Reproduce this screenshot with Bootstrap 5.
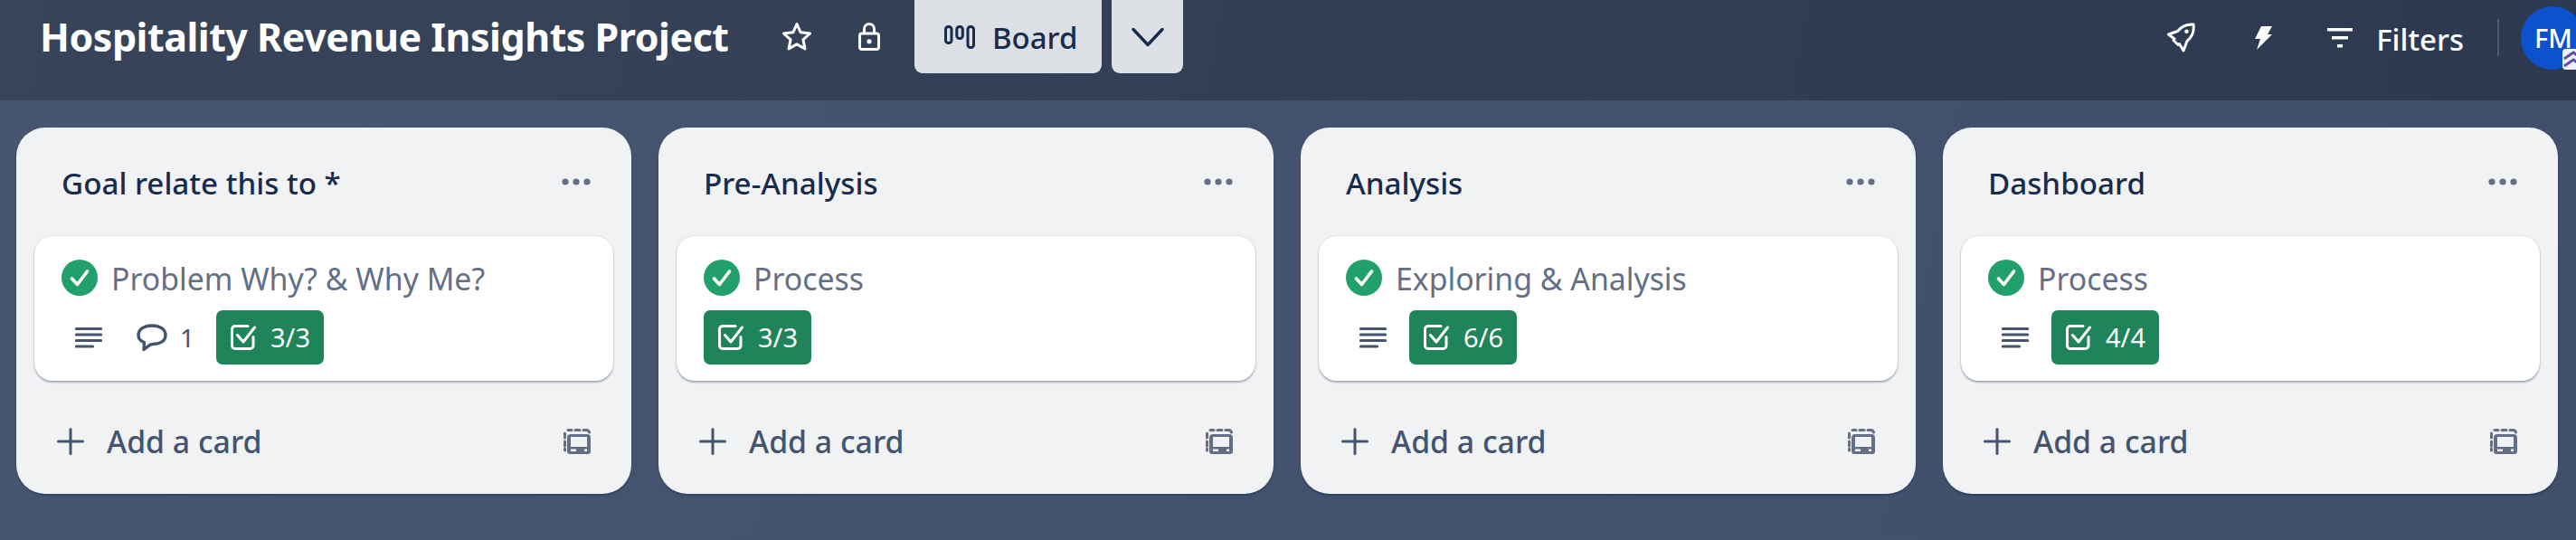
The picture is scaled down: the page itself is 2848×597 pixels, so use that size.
<!doctype html>
<html lang="en"><head><meta charset="utf-8"><title>Board</title>
<link href="https://cdn.jsdelivr.net/npm/bootstrap@5.3.0/dist/css/bootstrap.min.css" rel="stylesheet">
<style>
html,body{height:100%}
body{font-family:"Noto Sans","Open Sans",sans-serif;background:linear-gradient(100deg,#465671 0%,#3f4f6c 100%);overflow:hidden;color:#172b4d}
.topbar{height:111px;background:linear-gradient(100deg,#37445a 0%,#2d3950 100%);color:#fff;padding-left:44px;padding-right:0}
.board-title{font-size:43px;font-weight:700;line-height:86px;letter-spacing:-.48px;margin:0;width:762px;white-space:nowrap}
.ico-star{margin-left:58px}
.ico-lock{margin-left:51px}
.view-btn{background:#dcdfe4;color:#172b4d;height:81px;border-radius:0 0 9px 9px;font-size:33px;font-weight:500}
.view-board{width:207px;margin-left:38px;padding-left:33px;gap:19px}
.view-board span{padding-top:3px}
.view-more{width:79px;margin-left:11px}
.top-main{height:81px}
.top-right{height:82px;padding-top:1px}
.filters-label{font-size:33px;font-weight:500;margin-left:26px;line-height:1;padding-top:3px}
.v-sep{width:2px;height:41px;background:#4b5a73;margin-left:37px}
.avatar-clip{width:61px;height:70px;overflow:hidden;margin-left:24px;position:relative}
.avatar-dot{width:70px;height:70px;border-radius:50%;background:#0c52cc;color:#fff;font-size:29px;font-weight:500;padding-left:15px;line-height:70px}
.avatar-badge{position:absolute;right:-9px;bottom:0}
.lists{padding:30px 0 0 18px;gap:30px}
.tlist{width:680px;height:405px;background:#f1f2f4;border-radius:32px;padding:0 20px;box-shadow:0 2px 2px rgba(9,30,66,.3);flex:none}
.tlist-head{height:120px;padding:0 25px 0 30px}
.tlist-name{font-size:33.2px;font-weight:500;line-height:1;color:#172b4d;padding-top:3px}
.tcard{height:160px;background:#fff;border-radius:20px;box-shadow:0 2px 2px rgba(9,30,66,.3),0 0 2px rgba(9,30,66,.2);padding:25px 30px 0}
.tcard-title{font-size:33.8px;color:#626f86;line-height:40px;gap:15px}
.tcard-title span{padding-top:2px}
.tcard-meta{margin-top:15px;height:60px;color:#44546f;font-size:28px}
.meta-desc{margin:0 38px 0 15px}
.meta-num{margin:0 24px 0 14px;line-height:1}
.done-tag{width:119px;height:60px;background:#1f845a;border-radius:7px;color:#fff;font-size:29px;padding-left:16px;gap:16px}
.tlist-foot{height:125px;padding:8px 25px 0;color:#44546f}
.add-label{font-size:33.8px;font-weight:500;margin-left:25px;line-height:1;padding-top:3px}
</style></head>
<body>
<svg width="0" height="0" class="d-none">
<defs>
<symbol id="i-check" viewBox="0 0 40 40"><circle cx="20" cy="20" r="20" fill="#22a06b"/><path d="M11.500 21l6 6.500L28.500 13" fill="none" stroke="#fff" stroke-width="3.600" stroke-linecap="round" stroke-linejoin="round"/></symbol>
<symbol id="i-desc" viewBox="0 0 30 24"><path d="M1.500 2.500h27M1.500 9h27M1.500 15.500h27M1.500 22h18" stroke="#44546f" stroke-width="3.200" stroke-linecap="round" fill="none"/></symbol>
<symbol id="i-comment" viewBox="0 0 34 30"><path d="M17 2c8 0 15 3.500 15 10.500S25 22.500 18 22.500c-2 0-3.500 .5-5.500 2.500L8 28.500l.5-8C4 19 2 16 2 12.500 2 5.500 9 2 17 2Z" fill="none" stroke="#44546f" stroke-width="3.400" stroke-linejoin="round"/></symbol>
<symbol id="i-box" viewBox="0 0 28 28"><path d="M25 13.500V23a3.500 3.500 0 0 1-3.500 3.500H5A3.500 3.500 0 0 1 1.500 23V5A3.500 3.500 0 0 1 5 1.500h14" fill="none" stroke="#fff" stroke-width="3" stroke-linecap="round"/><path d="M7.500 11.500l6.500 7.500L26.500 3" fill="none" stroke="#fff" stroke-width="3" stroke-linecap="round" stroke-linejoin="round"/></symbol>
<symbol id="i-plus" viewBox="0 0 30 30"><path d="M15 1.500v27M1.500 15h27" stroke="#44546f" stroke-width="3" stroke-linecap="round"/></symbol>
<symbol id="i-tpl" viewBox="0 0 30 28"><path d="M5 1.500h4M13 1.500h5M22 1.500h3a3.500 3.500 0 0 1 3.500 2.500M1.500 5v5M1.500 14v5M1.500 22v2" stroke="#626f86" stroke-width="3" fill="none" stroke-linecap="round"/><path fill-rule="evenodd" d="M8 6h18a4 4 0 0 1 4 4v15a3 3 0 0 1-3 3H7a3 3 0 0 1-3-3V10a4 4 0 0 1 4-4Zm0 3v11h18V9ZM8 22.500v2.500h6v-2.500Zm15 0v2.500h3v-2.500Z" fill="#626f86"/></symbol>
</defs>
</svg>

<header class="topbar d-flex align-items-start justify-content-between">
  <div class="top-main d-flex align-items-center">
    <h1 class="board-title">Hospitality Revenue Insights Project</h1>
    <svg class="ico-star" width="34" height="33" viewBox="0 0 34 33"><path d="M17 2.500l4.200 9.300 10.300 1.200-7.600 6.900 2.100 10.100L17 24.900 8 30l2.100-10.100L2.500 13l10.300-1.200Z" fill="none" stroke="#fff" stroke-width="3" stroke-linejoin="round"/></svg>
    <svg class="ico-lock" width="24" height="31" viewBox="0 0 24 31"><path d="M6.500 12V7a5.500 5.500 0 0 1 11 0v5" fill="none" stroke="#fff" stroke-width="3"/><rect x="1.500" y="12" width="21" height="17.500" rx="2.500" fill="none" stroke="#fff" stroke-width="3"/><circle cx="12" cy="20.800" r="2.600" fill="#fff"/></svg>
    <div class="view-btn view-board d-flex align-items-center">
      <svg width="34" height="26" viewBox="0 0 34 26"><g fill="none" stroke="#172b4d" stroke-width="3"><rect x="1.500" y="1.500" width="6.500" height="18" rx="3"/><rect x="13.800" y="1.500" width="6.500" height="13" rx="3"/><rect x="26" y="1.500" width="6.500" height="23" rx="3"/></g></svg>
      <span>Board</span>
    </div>
    <div class="view-btn view-more d-flex align-items-center justify-content-center">
      <svg width="36" height="22" viewBox="0 0 36 22"><path d="M2 2.500l16 17 16-17" fill="none" stroke="#172b4d" stroke-width="3.400" stroke-linecap="round" stroke-linejoin="round"/></svg>
    </div>
  </div>
  <div class="top-right d-flex align-items-center">
    <svg width="32" height="33" viewBox="0 0 32 33"><path d="M30 2C24 1.500 17 4 12.500 9.500L2.500 13 9 18l-1 1.500 5 5 1.500-1L19 31l4-10.500C28.500 16 31 9 30 2Z" fill="none" stroke="#fff" stroke-width="3" stroke-linejoin="round"/><circle cx="22.500" cy="9.800" r="2.300" fill="#fff"/></svg>
    <svg style="margin-left:65px" width="20" height="26" viewBox="0 0 20 26"><path d="M8 0h12l-5 9h5L3 26l4-12H1Z" fill="#fff"/></svg>
    <svg style="margin-left:61px" width="28" height="22" viewBox="0 0 28 22"><path d="M0 0h28v3.500H0ZM5 9h18v3.500H5ZM11 18h6v3.500h-6Z" fill="#fff"/></svg>
    <span class="filters-label">Filters</span>
    <span class="v-sep"></span>
    <div class="avatar-clip">
      <div class="avatar-dot">FM</div>
      <svg class="avatar-badge" width="24" height="23" viewBox="0 0 24 23"><rect width="24" height="23" rx="4" fill="#eef0fa"/><path d="M2 11l10-7 10 7M2 19l10-7 10 7" fill="none" stroke="#5e4db2" stroke-width="3"/></svg>
    </div>
  </div>
</header>

<main class="lists d-flex align-items-start">

  <section class="tlist">
    <div class="tlist-head d-flex align-items-center justify-content-between">
      <span class="tlist-name">Goal relate this to *</span>
      <svg width="32" height="8" viewBox="0 0 32 8" fill="#626f86"><circle cx="4" cy="4" r="3.600"/><circle cx="16" cy="4" r="3.600"/><circle cx="28" cy="4" r="3.600"/></svg>
    </div>
    <article class="tcard">
      <div class="tcard-title d-flex align-items-center"><svg width="40" height="40"><use href="#i-check"/></svg><span>Problem Why? &amp; Why Me?</span></div>
      <div class="tcard-meta d-flex align-items-center">
        <svg class="meta-desc" width="30" height="24"><use href="#i-desc"/></svg>
        <svg width="34" height="30"><use href="#i-comment"/></svg>
        <span class="meta-num">1</span>
        <span class="done-tag d-flex align-items-center"><svg width="28" height="28"><use href="#i-box"/></svg>3/3</span>
      </div>
    </article>
    <div class="tlist-foot d-flex align-items-center">
      <svg width="30" height="30"><use href="#i-plus"/></svg><span class="add-label">Add a card</span>
      <svg class="ms-auto" width="30" height="28"><use href="#i-tpl"/></svg>
    </div>
  </section>

  <section class="tlist">
    <div class="tlist-head d-flex align-items-center justify-content-between">
      <span class="tlist-name">Pre-Analysis</span>
      <svg width="32" height="8" viewBox="0 0 32 8" fill="#626f86"><circle cx="4" cy="4" r="3.600"/><circle cx="16" cy="4" r="3.600"/><circle cx="28" cy="4" r="3.600"/></svg>
    </div>
    <article class="tcard">
      <div class="tcard-title d-flex align-items-center"><svg width="40" height="40"><use href="#i-check"/></svg><span>Process</span></div>
      <div class="tcard-meta d-flex align-items-center">
        <span class="done-tag d-flex align-items-center"><svg width="28" height="28"><use href="#i-box"/></svg>3/3</span>
      </div>
    </article>
    <div class="tlist-foot d-flex align-items-center">
      <svg width="30" height="30"><use href="#i-plus"/></svg><span class="add-label">Add a card</span>
      <svg class="ms-auto" width="30" height="28"><use href="#i-tpl"/></svg>
    </div>
  </section>

  <section class="tlist">
    <div class="tlist-head d-flex align-items-center justify-content-between">
      <span class="tlist-name">Analysis</span>
      <svg width="32" height="8" viewBox="0 0 32 8" fill="#626f86"><circle cx="4" cy="4" r="3.600"/><circle cx="16" cy="4" r="3.600"/><circle cx="28" cy="4" r="3.600"/></svg>
    </div>
    <article class="tcard">
      <div class="tcard-title d-flex align-items-center"><svg width="40" height="40"><use href="#i-check"/></svg><span>Exploring &amp; Analysis</span></div>
      <div class="tcard-meta d-flex align-items-center">
        <svg class="meta-desc" style="margin-right:25px" width="30" height="24"><use href="#i-desc"/></svg>
        <span class="done-tag d-flex align-items-center"><svg width="28" height="28"><use href="#i-box"/></svg>6/6</span>
      </div>
    </article>
    <div class="tlist-foot d-flex align-items-center">
      <svg width="30" height="30"><use href="#i-plus"/></svg><span class="add-label">Add a card</span>
      <svg class="ms-auto" width="30" height="28"><use href="#i-tpl"/></svg>
    </div>
  </section>

  <section class="tlist">
    <div class="tlist-head d-flex align-items-center justify-content-between">
      <span class="tlist-name">Dashboard</span>
      <svg width="32" height="8" viewBox="0 0 32 8" fill="#626f86"><circle cx="4" cy="4" r="3.600"/><circle cx="16" cy="4" r="3.600"/><circle cx="28" cy="4" r="3.600"/></svg>
    </div>
    <article class="tcard">
      <div class="tcard-title d-flex align-items-center"><svg width="40" height="40"><use href="#i-check"/></svg><span>Process</span></div>
      <div class="tcard-meta d-flex align-items-center">
        <svg class="meta-desc" style="margin-right:25px" width="30" height="24"><use href="#i-desc"/></svg>
        <span class="done-tag d-flex align-items-center"><svg width="28" height="28"><use href="#i-box"/></svg>4/4</span>
      </div>
    </article>
    <div class="tlist-foot d-flex align-items-center">
      <svg width="30" height="30"><use href="#i-plus"/></svg><span class="add-label">Add a card</span>
      <svg class="ms-auto" width="30" height="28"><use href="#i-tpl"/></svg>
    </div>
  </section>

</main>
<script src="https://cdn.jsdelivr.net/npm/bootstrap@5.3.0/dist/js/bootstrap.bundle.min.js"></script>
</body></html>
